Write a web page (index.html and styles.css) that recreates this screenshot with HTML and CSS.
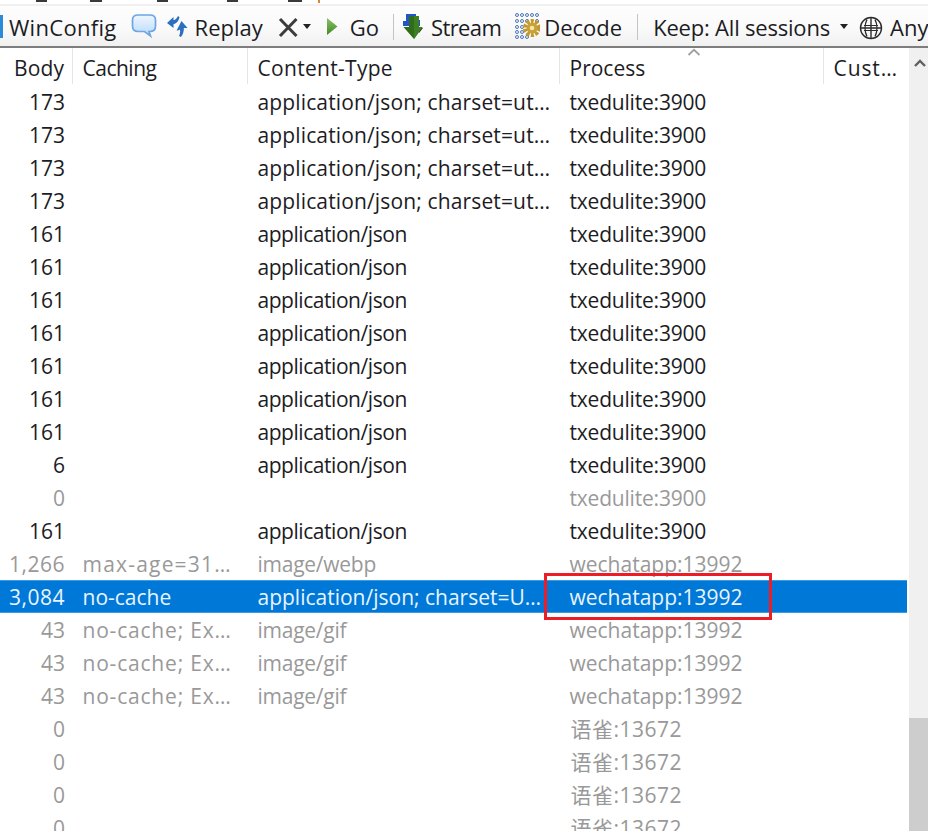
FILE: index.html
```html
<!DOCTYPE html>
<html lang="en">
<head>
<meta charset="utf-8">
<title>Fiddler sessions</title>
<link rel="stylesheet" href="styles.css">
</head>
<body>
<div class="clip-strip">
  <i class="d d1"></i><i class="d d2"></i><i class="d d3"></i><i class="d d4"></i><i class="d d5"></i><i class="d d6"></i>
</div>
<div class="toolbar">
  <i class="edge-icon"></i>
  <span class="tb t-win">WinConfig</span>
  <svg class="ic ic-bubble" width="26" height="28" viewBox="0 0 26 28"><defs><linearGradient id="bub" x1="0" y1="0" x2="0" y2="1"><stop offset="0" stop-color="#eef6fe"/><stop offset="1" stop-color="#b9dafa"/></linearGradient></defs><path d="M7 3h12c3.500 0 5.500 2 5.500 5v6c0 3.500-2 5.500-5.500 5.500h-1l1.500 4.500-6-4.500H7c-3.500 0-5.500-2-5.500-5.500V8C1.500 5 3.500 3 7 3z" fill="url(#bub)" stroke="#6ba7e2" stroke-width="1.700"/></svg>
  <svg class="ic ic-replay" width="22" height="28" viewBox="0 0 22 28"><path d="M1 11l6.500-6v3.200c2-.4 3.500-2 4.500-4.200l1.500 1.200c-.8 3.500-2.500 6-6 7v3.800z" fill="#2a6fc0"/><path d="M15.500 9l6 7h-3.600c0 3.500-1 7-3 9l-1.900-1c1-2 1.300-4 1-6.500-1 .8-2 1-3.400 1z" fill="#2a6fc0"/></svg>
  <span class="tb t-replay">Replay</span>
  <svg class="ic ic-x" width="21" height="28" viewBox="0 0 21 28"><path d="M2 7l16.500 17M18.500 7L2 24" stroke="#3c3c3c" stroke-width="3" fill="none"/></svg>
  <i class="caret caret-x"></i>
  <svg class="ic ic-go" width="11" height="28" viewBox="0 0 11 28"><defs><linearGradient id="gog" x1="0" y1="0" x2="0" y2="1"><stop offset="0" stop-color="#8fc06a"/><stop offset="1" stop-color="#3e8a24"/></linearGradient></defs><path d="M0 6l10.500 8.500L0 23z" fill="url(#gog)"/></svg>
  <span class="tb t-go">Go</span>
  <i class="sep sep-a"></i>
  <svg class="ic ic-stream" width="21" height="28" viewBox="0 0 21 28"><path d="M4 2h10v6h4v6H1V9h3z" fill="#2454cc"/><path d="M16 16h5l-4 5z" fill="#2a2a2a"/><path d="M7 4h10v11h3.500L12 27 1.500 15H7z" fill="#2f6d1a"/><path d="M12 4h5v11h3.500L12 27z" fill="#3d7f22"/></svg>
  <span class="tb t-stream">Stream</span>
  <svg class="ic ic-decode" width="25" height="28" viewBox="0 0 25 28"><g fill="#eef3fb" stroke="#4f78b8" stroke-width="1"><circle cx="2" cy="3" r="1.500"/><circle cx="7" cy="3" r="1.500"/><circle cx="12" cy="3" r="1.500"/><circle cx="17" cy="3" r="1.500"/><circle cx="22" cy="3" r="1.500"/><circle cx="2" cy="9" r="1.500"/><circle cx="7" cy="9" r="1.500"/><circle cx="12" cy="9" r="1.500"/><circle cx="22" cy="9" r="1.500"/><circle cx="2" cy="15" r="1.500"/><circle cx="7" cy="15" r="1.500"/><circle cx="2" cy="20" r="1.500"/><circle cx="7" cy="20" r="1.500"/><circle cx="2" cy="25" r="1.500"/><circle cx="7" cy="25" r="1.500"/><circle cx="12" cy="25" r="1.500"/></g><circle cx="17" cy="16" r="6.500" fill="none" stroke="#c2982c" stroke-width="5" stroke-dasharray="2.800 1.300"/><circle cx="17" cy="16" r="5.500" fill="#c9a137"/><circle cx="17" cy="16" r="2.300" fill="#f3e4a8"/></svg>
  <span class="tb t-decode">Decode</span>
  <i class="sep sep-b"></i>
  <span class="tb t-keep">Keep: All sessions</span>
  <i class="caret caret-keep"></i>
  <svg class="ic ic-any" width="24" height="28" viewBox="0 0 24 28"><g fill="none" stroke="#2c2c2c" stroke-width="1.400"><circle cx="12" cy="16" r="10.500"/><path d="M1.500 16h21M12 5.500v21M8 7.500c-2.500 5-2.500 12 0 17M16 7.500c2.500 5 2.500 12 0 17"/><path d="M5 13.500h14M5 18.500h14" stroke-width="1"/></g></svg>
  <span class="tb t-any">Any</span>
</div>
<div class="panel">
  <div class="list">
    <div class="row head">
      <span class="num">Body</span><span class="cell h-cache">Caching</span><span class="cell h-type">Content-Type</span><span class="cell">Process</span><span class="cell h-cust">Cust…</span>
      <svg class="sort" width="14" height="8" viewBox="0 0 14 8"><path d="M1.500 7L7 1.800 12.500 7" fill="none" stroke="#a0a0a0" stroke-width="1.800"/></svg>
    </div>
    <div class="row"><span class="num">173</span><span class="cell"></span><span class="cell jc">application/json; charset=ut…</span><span class="cell tx">txedulite:3900</span><span class="cell"></span></div>
    <div class="row"><span class="num">173</span><span class="cell"></span><span class="cell jc">application/json; charset=ut…</span><span class="cell tx">txedulite:3900</span><span class="cell"></span></div>
    <div class="row"><span class="num">173</span><span class="cell"></span><span class="cell jc">application/json; charset=ut…</span><span class="cell tx">txedulite:3900</span><span class="cell"></span></div>
    <div class="row"><span class="num">173</span><span class="cell"></span><span class="cell jc">application/json; charset=ut…</span><span class="cell tx">txedulite:3900</span><span class="cell"></span></div>
    <div class="row"><span class="num">161</span><span class="cell"></span><span class="cell j">application/json</span><span class="cell tx">txedulite:3900</span><span class="cell"></span></div>
    <div class="row"><span class="num">161</span><span class="cell"></span><span class="cell j">application/json</span><span class="cell tx">txedulite:3900</span><span class="cell"></span></div>
    <div class="row"><span class="num">161</span><span class="cell"></span><span class="cell j">application/json</span><span class="cell tx">txedulite:3900</span><span class="cell"></span></div>
    <div class="row"><span class="num">161</span><span class="cell"></span><span class="cell j">application/json</span><span class="cell tx">txedulite:3900</span><span class="cell"></span></div>
    <div class="row"><span class="num">161</span><span class="cell"></span><span class="cell j">application/json</span><span class="cell tx">txedulite:3900</span><span class="cell"></span></div>
    <div class="row"><span class="num">161</span><span class="cell"></span><span class="cell j">application/json</span><span class="cell tx">txedulite:3900</span><span class="cell"></span></div>
    <div class="row"><span class="num">161</span><span class="cell"></span><span class="cell j">application/json</span><span class="cell tx">txedulite:3900</span><span class="cell"></span></div>
    <div class="row"><span class="num">6</span><span class="cell"></span><span class="cell j">application/json</span><span class="cell tx">txedulite:3900</span><span class="cell"></span></div>
    <div class="row dim"><span class="num">0</span><span class="cell"></span><span class="cell"></span><span class="cell tx">txedulite:3900</span><span class="cell"></span></div>
    <div class="row"><span class="num">161</span><span class="cell"></span><span class="cell j">application/json</span><span class="cell tx">txedulite:3900</span><span class="cell"></span></div>
    <div class="row dim"><span class="num wide">1,266</span><span class="cell c-age">max-age=31…</span><span class="cell t-img">image/webp</span><span class="cell">wechatapp:13992</span><span class="cell"></span></div>
    <div class="row sel"><span class="num wide">3,084</span><span class="cell">no-cache</span><span class="cell">application/json; charset=U…</span><span class="cell">wechatapp:13992</span><span class="cell"></span></div>
    <div class="row dim"><span class="num">43</span><span class="cell c-ex">no-cache; Ex…</span><span class="cell t-img">image/gif</span><span class="cell">wechatapp:13992</span><span class="cell"></span></div>
    <div class="row dim"><span class="num">43</span><span class="cell c-ex">no-cache; Ex…</span><span class="cell t-img">image/gif</span><span class="cell">wechatapp:13992</span><span class="cell"></span></div>
    <div class="row dim"><span class="num">43</span><span class="cell c-ex">no-cache; Ex…</span><span class="cell t-img">image/gif</span><span class="cell">wechatapp:13992</span><span class="cell"></span></div>
    <div class="row dim"><span class="num">0</span><span class="cell"></span><span class="cell"></span><span class="cell cjk">语雀:13672</span><span class="cell"></span></div>
    <div class="row dim"><span class="num">0</span><span class="cell"></span><span class="cell"></span><span class="cell cjk">语雀:13672</span><span class="cell"></span></div>
    <div class="row dim"><span class="num">0</span><span class="cell"></span><span class="cell"></span><span class="cell cjk">语雀:13672</span><span class="cell"></span></div>
    <div class="row dim"><span class="num">0</span><span class="cell"></span><span class="cell"></span><span class="cell cjk">语雀:13672</span><span class="cell"></span></div>
    <i class="red-box"></i>
  </div>
  <div class="scrollbar">
    <svg class="sb-up" width="14" height="10" viewBox="0 0 14 10"><path d="M2 8l5-5 5 5" fill="none" stroke="#606060" stroke-width="2.400"/></svg>
    <div class="sb-thumb"></div>
  </div>
</div>
</body>
</html>
```
FILE: styles.css
```css
* { box-sizing: border-box; }
html, body { margin: 0; height: 831px; overflow: hidden; background: #fff; }
body {
  display: flex;
  flex-direction: column;
  font-family: "Open Sans", "Noto Sans CJK SC", sans-serif;
  font-size: 21px;
  color: #1c1c24;
}
.clip-strip { height: 6px; background: #fff; border-bottom: 2px solid #f0f0f0; position: relative; flex: none; }
.d { position: absolute; top: 0; height: 2px; background: #3a3a3a; }
.d1 { left: 36px; width: 11px; }
.d2 { left: 90px; width: 12px; }
.d3 { left: 157px; width: 11px; }
.d4 { left: 227px; width: 11px; }
.d5 { left: 288px; width: 14px; }
.d6 { left: 318px; width: 2px; height: 3px; background: #d9853a; }

.toolbar {
  flex: none;
  height: 42px;
  display: flex;
  align-items: center;
  background: linear-gradient(#fdfdfd, #fafafa 55%, #f1f1f1);
  border-bottom: 2px solid #7d7d7d;
  white-space: nowrap;
  font-size: 22px;
}
.edge-icon { width: 3px; height: 23px; background: #2b8bd8; flex: none; }
.tb { flex: none; padding-top: 2px; line-height: 30px; }
.ic { flex: none; display: block; }
.t-win { margin-left: 6px; letter-spacing: 0.3px; }
.ic-bubble { margin-left: 14px; }
.ic-replay { margin-left: 9px; }
.t-replay { margin-left: 7px; }
.ic-x { margin-left: 15px; }
.caret { width: 0; height: 0; flex: none; margin-top: 1px; border: 4px solid transparent; border-top: 5px solid #222; border-bottom: 0; }
.caret-x { margin-left: 4px; }
.ic-go { margin-left: 16px; }
.t-go { margin-left: 12px; }
.sep { flex: none; width: 1px; height: 26px; margin-top: 2px; background: #c4c4c4; }
.sep-a { margin-left: 14px; }
.ic-stream { margin-left: 8px; }
.t-stream { margin-left: 8px; letter-spacing: -0.6px; }
.ic-decode { margin-left: 14px; }
.t-decode { margin-left: 4px; }
.sep-b { margin-left: 15px; }
.t-keep { margin-left: 15px; letter-spacing: -0.2px; }
.caret-keep { margin-left: 10px; }
.ic-any { margin-left: 11px; }
.t-any { margin-left: 7px; }

.panel { flex: 1; min-height: 0; display: flex; }
.list { flex: 1; min-width: 0; position: relative; overflow: hidden; }
.row {
  display: grid;
  grid-template-columns: 73px 175px 312px 264px 83px;
  width: 907px;
  height: 33px;
  line-height: 35px;
  white-space: nowrap;
}
.num { text-align: right; padding-right: 8px; }
.cell { padding-left: 9.500px; overflow: hidden; }
.wide { letter-spacing: 0.5px; }
.j { letter-spacing: -0.45px; }
.jc { letter-spacing: 0.14px; }
.tx { letter-spacing: -0.2px; }
.c-age { letter-spacing: 1.2px; }
.c-ex { letter-spacing: 0.8px; }
.t-img { letter-spacing: -0.25px; }
.cjk { letter-spacing: 0.5px; padding-left: 10.500px; }

.head { height: 37px; line-height: 40px; position: relative; }
.head .num, .head .cell { height: 36px; border-right: 1px solid #e5e5e5; }
.head .cell:last-of-type { border-right: 0; }
.head .num { letter-spacing: 0.1px; }
.h-cache { letter-spacing: -0.5px; }
.h-type { letter-spacing: 0.3px; }
.h-cust { letter-spacing: 0.9px; }
.sort { position: absolute; left: 687px; top: 0; }

.dim { color: #999; }
.sel { background: #0078d7; color: #e8f4ff; border-top: 1px solid #3c9be6; border-bottom: 1px solid #3c9be6; line-height: 33px; }
.red-box { position: absolute; left: 544px; top: 525px; width: 228px; height: 47px; border: 3px solid #ee1c25; }

.scrollbar { flex: none; width: 19px; position: relative; background: #f0f0f0; }
.sb-up { position: absolute; left: 4px; top: 10px; }
.sb-thumb { position: absolute; left: 0; right: 0; top: 670px; bottom: 0; background: #cdcdcd; }
```
